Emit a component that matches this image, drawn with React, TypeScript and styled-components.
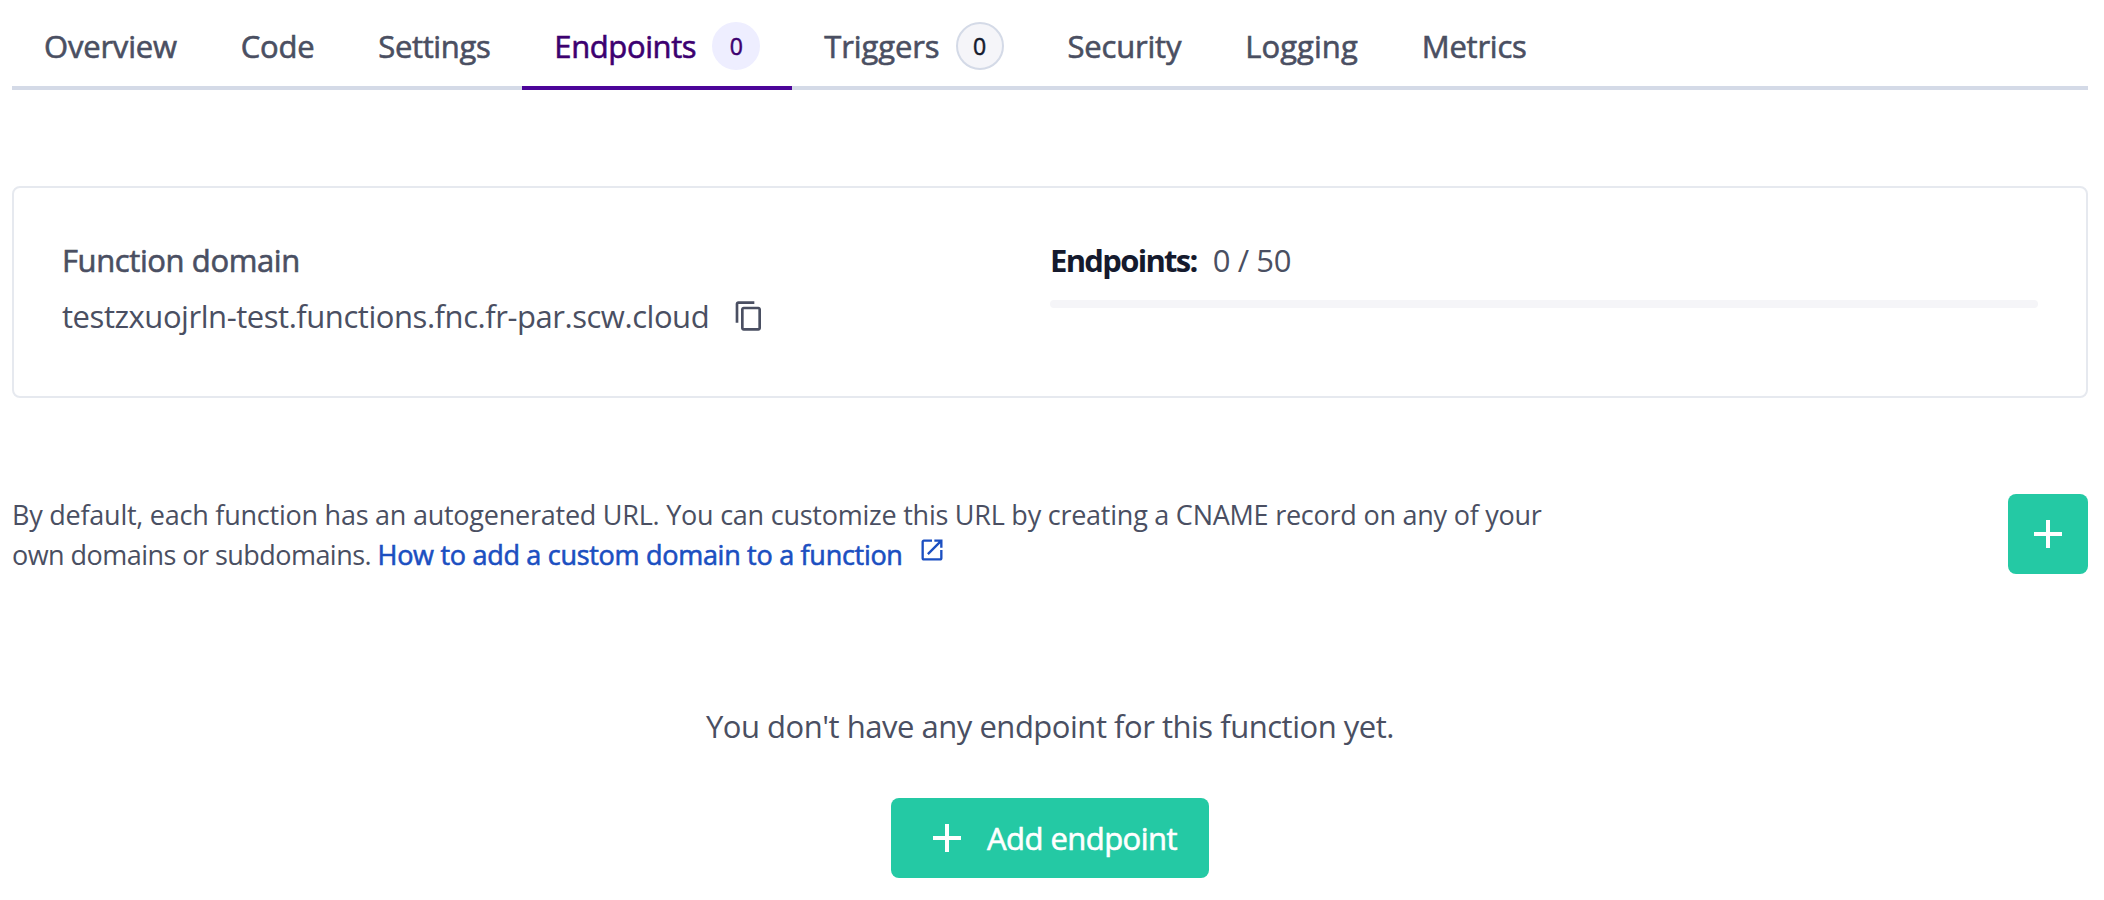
import React from "react";
import styled, { createGlobalStyle } from "styled-components";

const GlobalStyle = createGlobalStyle`
  *, *::before, *::after { box-sizing: border-box; }
  body {
    margin: 0;
    background: #fff;
    color: #4a4f62;
    font-family: "Open Sans", "Noto Sans", sans-serif;
    font-size: 31px;
    line-height: 48px;
  }
  button { font: inherit; border: 0; cursor: pointer; }
`;

const Page = styled.main`
  padding: 0 16px 22px 12px;
  min-height: 900px;
`;

/* Open Sans has no medium cut here, so a thin stroke gives the weight. */
const Label = styled.span<{ $track?: number; $medium?: boolean }>`
  letter-spacing: ${(p) => p.$track ?? 0}px;
  -webkit-text-stroke: ${(p) => (p.$medium ? "0.6px currentColor" : "0")};
  white-space: nowrap;
`;

const TabBar = styled.nav`
  display: flex;
  height: 90px;
  box-shadow: inset 0 -4px #d4dae7;
`;

const Tab = styled.a<{ $active?: boolean }>`
  display: flex;
  align-items: center;
  gap: 16px;
  padding: 6px 32px 0;
  color: ${(p) => (p.$active ? "#3c0070" : "inherit")};
  border-bottom: 4px solid ${(p) => (p.$active ? "#4c0499" : "transparent")};
`;

const Badge = styled.span<{ $active?: boolean }>`
  display: flex;
  align-items: center;
  justify-content: center;
  width: 48px;
  height: 48px;
  border-radius: 50%;
  border: 2px solid ${(p) => (p.$active ? "#eeeeff" : "#d4dae7")};
  background: ${(p) => (p.$active ? "#eeeeff" : "#f5f5f9")};
  color: ${(p) => (p.$active ? "#3c0070" : "#151a2d")};
  font-size: 23px;
  -webkit-text-stroke: 0.5px currentColor;
`;

const Card = styled.section`
  display: grid;
  grid-template-columns: 1fr 1fr;
  height: 212px;
  margin-top: 96px;
  padding: 48px;
  border: 2px solid #e6e9ef;
  border-radius: 8px;
`;

const DomainRow = styled.div`
  display: flex;
  align-items: center;
  gap: 24px;
  margin-top: 8px;
`;

const IconButton = styled.button`
  display: flex;
  padding: 0;
  background: none;
  color: inherit;
`;

const Quota = styled.div`
  display: flex;
  gap: 16px;
`;

const QuotaName = styled.strong`
  color: #151a2d;
  font-weight: 700;
  letter-spacing: -1.7px;
`;

const Progress = styled.div`
  height: 8px;
  margin-top: 16px;
  border-radius: 4px;
  background: #f5f5f8;
`;

const Intro = styled.section`
  display: flex;
  justify-content: space-between;
  height: 80px;
  margin-top: 96px;
`;

const IntroText = styled.p`
  margin: 0;
  padding-top: 1px;
  font-size: 27px;
  line-height: 40px;
`;

const DocLink = styled.a`
  color: #1b4fc1;
`;

const ExternalIcon = styled.svg`
  margin-left: 15px;
  vertical-align: 1px;
`;

const PrimaryButton = styled.button<{ $square?: boolean }>`
  display: flex;
  align-items: center;
  justify-content: center;
  gap: 16px;
  width: ${(p) => (p.$square ? "80px" : "318px")};
  height: 80px;
  padding: 0;
  border-radius: 8px;
  background: #24c9a4;
  color: #fff;
`;

const Empty = styled.section`
  display: flex;
  flex-direction: column;
  align-items: center;
  gap: 48px;
  margin-top: 128px;
`;

const PlusIcon = () => (
  <svg width="48" height="48" viewBox="0 0 24 24" fill="currentColor">
    <path d="M19 13h-6v6h-2v-6H5v-2h6V5h2v6h6v2z" />
  </svg>
);

const CopyIcon = () => (
  <svg width="32" height="32" viewBox="0 0 24 24" fill="currentColor">
    <path d="M16 1H4c-1.1 0-2 .9-2 2v14h2V3h12V1zm3 4H8c-1.1 0-2 .9-2 2v14c0 1.1.9 2 2 2h11c1.1 0 2-.9 2-2V7c0-1.1-.9-2-2-2zm0 16H8V7h11v14z" />
  </svg>
);

type TabItem = { name: string; track: number; count?: number; active?: boolean };

const tabs: TabItem[] = [
  { name: "Overview", track: -0.2 },
  { name: "Code", track: -0.28 },
  { name: "Settings", track: -0.36 },
  { name: "Endpoints", track: -0.4, count: 0, active: true },
  { name: "Triggers", track: -0.1, count: 0 },
  { name: "Security", track: -0.2 },
  { name: "Logging", track: 0.05 },
  { name: "Metrics", track: -0.25 },
];

export default function App() {
  return (
    <>
      <GlobalStyle />
      <Page>
        <TabBar>
          {tabs.map((t) => (
            <Tab key={t.name} $active={t.active}>
              <Label $medium $track={t.track}>{t.name}</Label>
              {t.count !== undefined && <Badge $active={t.active}>{t.count}</Badge>}
            </Tab>
          ))}
        </TabBar>

        <Card>
          <div>
            <Label $medium $track={-0.4}>Function domain</Label>
            <DomainRow>
              <Label $track={-0.45}>testzxuojrln-test.functions.fnc.fr-par.scw.cloud</Label>
              <IconButton aria-label="Copy">
                <CopyIcon />
              </IconButton>
            </DomainRow>
          </div>
          <div>
            <Quota>
              <QuotaName>Endpoints:</QuotaName>
              <Label $track={-0.4}>0 / 50</Label>
            </Quota>
            <Progress />
          </div>
        </Card>

        <Intro>
          <IntroText>
            <Label $track={-0.24}>
              By default, each function has an autogenerated URL. You can customize this URL by creating a CNAME record on any of your
            </Label>
            <br />
            <Label $track={-0.54}>own domains or subdomains. </Label>
            <DocLink>
              <Label $medium $track={-0.29}>How to add a custom domain to a function</Label>
              <ExternalIcon width="28" height="28" viewBox="0 0 24 24" fill="currentColor">
                <path d="M19 19H5V5h7V3H5c-1.11 0-2 .9-2 2v14c0 1.1.89 2 2 2h14c1.1 0 2-.9 2-2v-7h-2v7zM14 3v2h3.59l-9.83 9.83 1.41 1.41L19 6.41V10h2V3h-7z" />
              </ExternalIcon>
            </DocLink>
          </IntroText>
          <PrimaryButton $square aria-label="Add">
            <PlusIcon />
          </PrimaryButton>
        </Intro>

        <Empty>
          <Label $track={-0.48}>You don't have any endpoint for this function yet.</Label>
          <PrimaryButton>
            <PlusIcon />
            <Label $medium $track={-0.55}>Add endpoint</Label>
          </PrimaryButton>
        </Empty>
      </Page>
    </>
  );
}
